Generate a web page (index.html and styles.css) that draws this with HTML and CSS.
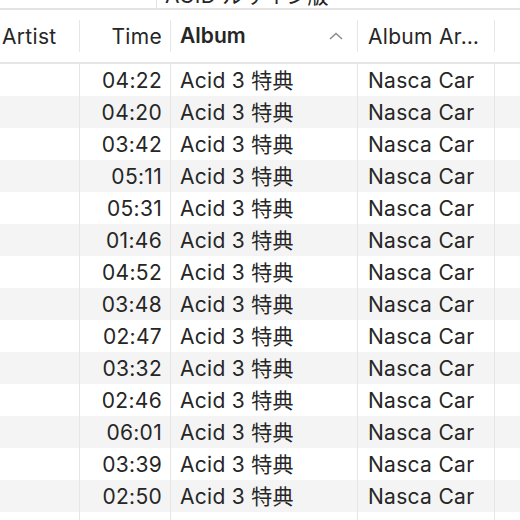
FILE: index.html
```html
<!DOCTYPE html>
<html>
<head>
  <title>Songs</title>
  <meta charset="utf-8">
  <link rel="stylesheet" href="styles.css">
</head>
<body>
<div class="above">
  <div class="above-left"></div>
  <div class="above-text"><span>ACID ルサイン版</span></div>
</div>

<div class="head">
  <div class="cell artist">Artist</div>
  <div class="cell time">Time</div>
  <div class="cell album sorted">Album
    <svg class="chevron" width="14" height="8" viewBox="0 0 14 8"><path d="M1 7 L7 1.5 L13 7" fill="none" stroke="#8c8c8c" stroke-width="1.5"/></svg>
  </div>
  <div class="cell albumartist">Album Ar…</div>
  <div class="cell rest"></div>
</div>

<div id="rows"></div>

<script>
  var times = ['04:22', '04:20', '03:42', '05:11', '05:31', '01:46', '04:52',
    '03:48', '02:47', '03:32', '02:46', '06:01', '03:39', '02:50', ''];
  var list = document.getElementById('rows');

  for (var i = 0; i < times.length; i++) {
    var row = document.createElement('div');
    row.className = i % 2 ? 'row odd' : 'row';
    var filled = times[i] !== '';
    row.innerHTML =
      '<div class="cell artist"></div>' +
      '<div class="cell time">' + times[i] + '</div>' +
      '<div class="cell album">' + (filled ? 'Acid 3 特典' : '') + '</div>' +
      '<div class="cell albumartist">' + (filled ? 'Nasca Car' : '') + '</div>' +
      '<div class="cell rest"></div>';
    list.appendChild(row);
  }
</script>
</body>
</html>
```

FILE: styles.css
```css
body {
  margin: 0;
  font-family: Inter, "Noto Sans CJK JP", sans-serif;
  font-size: 21px;
  letter-spacing: 0.3px;
  color: #262626;
  background: #fff;
  overflow: hidden;
}

.above {
  display: flex;
  height: 8px;
  border-bottom: 2px solid #e3e3e3;
}

.above-left {
  width: 156px;
  border-right: 1px solid #e3e3e3;
}

.above-text {
  overflow: hidden;
  padding-left: 8px;
  line-height: 32px;
}

.above-text span {
  display: block;
  margin-top: -20px;
}

.head,
.row {
  display: grid;
  grid-template-columns: 80px 91px 187px 137px 1fr;
}

.head {
  padding: 10px 0;
  height: 32px;
  border-bottom: 2px solid #e6e6e6;
  align-items: center;
}

.cell {
  height: 32px;
  line-height: 34px;
  border-right: 1px solid #e6e6e6;
  white-space: nowrap;
  overflow: hidden;
}

.cell.rest {
  border-right: none;
}

.artist {
  padding-left: 2px;
}

.time {
  text-align: right;
  padding-right: 8px;
}

.album {
  padding-left: 9px;
}

.albumartist {
  padding-left: 10px;
}

.sorted {
  font-weight: 600;
  letter-spacing: 0;
  display: flex;
  align-items: center;
}

.chevron {
  margin-left: auto;
  margin-right: 14px;
}

.row.odd {
  background: #f4f4f4;
}
```
